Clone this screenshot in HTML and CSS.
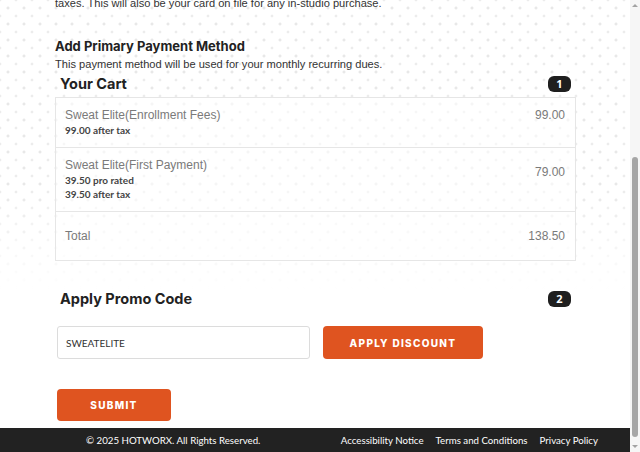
FILE: index.html
```html
<!DOCTYPE html>
<html lang="en">
<head>
<meta charset="utf-8">
<title>Checkout</title>
<link rel="stylesheet" href="styles.css">
</head>
<body>
<div class="page">
  <main class="content">
    <p class="intro">taxes. This will also be your card on file for any in-studio purchase.</p>
    <h2 class="section-title">Add Primary Payment Method</h2>
    <p class="desc">This payment method will be used for your monthly recurring dues.</p>

    <div class="step-head cart-head">
      <h3 class="step-title">Your Cart</h3>
      <span class="badge">1</span>
    </div>
    <div class="cart">
      <div class="cart-row">
        <div class="item">
          <div class="item-name">Sweat Elite(Enrollment Fees)</div>
          <div class="item-sub">99.00 after tax</div>
        </div>
        <div class="price">99.00</div>
      </div>
      <div class="cart-row">
        <div class="item">
          <div class="item-name">Sweat Elite(First Payment)</div>
          <div class="item-sub">39.50 pro rated</div>
          <div class="item-sub">39.50 after tax</div>
        </div>
        <div class="price price-mid">79.00</div>
      </div>
      <div class="cart-row total-row">
        <div class="item-name">Total</div>
        <div class="price">138.50</div>
      </div>
    </div>

    <div class="step-head promo-head">
      <h3 class="step-title">Apply Promo Code</h3>
      <span class="badge">2</span>
    </div>
    <div class="promo-row">
      <input class="promo-input" type="text" value="SWEATELITE">
      <button class="btn btn-apply" type="button">APPLY DISCOUNT</button>
    </div>
    <button class="btn btn-submit" type="button">SUBMIT</button>
  </main>
  <footer class="footer">
    <span class="copy">© 2025 HOTWORX. All Rights Reserved.</span>
    <nav class="links">
      <a href="#">Accessibility Notice</a>
      <a href="#">Terms and Conditions</a>
      <a href="#">Privacy Policy</a>
    </nav>
  </footer>
</div>
<div class="scrollbar">
  <div class="arrow arrow-up"></div>
  <div class="track"><div class="thumb"></div></div>
  <div class="arrow arrow-down"></div>
</div>
</body>
</html>
```
FILE: styles.css
```css
* { box-sizing: border-box; }
html, body { margin: 0; padding: 0; height: 452px; overflow: hidden; }
body {
  display: flex;
  font-family: "Liberation Sans", Arial, sans-serif;
  color: #333;
  background: #fff;
}
.page {
  flex: 1;
  display: flex;
  flex-direction: column;
  height: 452px;
  background:
    linear-gradient(to bottom, rgba(255,255,255,0) 0, rgba(255,255,255,0) 190px, #fff 290px),
    radial-gradient(circle, #e8e8e8 1.2px, rgba(255,255,255,0) 1.8px) 0 0 / 16px 16px,
    radial-gradient(circle, #ececec 1.1px, rgba(255,255,255,0) 1.7px) 8px 8px / 16px 16px,
    #fff;
}
.content {
  flex: 1;
  padding-left: 55px;
  display: flex;
  flex-direction: column;
  align-items: flex-start;
}
.intro {
  margin: -5px 0 0;
  font-size: 11.1px;
  line-height: 16px;
  color: #333;
}
.section-title {
  margin: 26px 0 0;
  font-family: Inter, "Liberation Sans", sans-serif;
  font-weight: 700;
  font-size: 13px;
  line-height: 18px;
  color: #222;
}
.desc {
  margin: 1px 0 0;
  font-size: 11.1px;
  line-height: 16px;
  color: #333;
}
.step-head {
  width: 521px;
  display: flex;
  justify-content: space-between;
  align-items: center;
  padding: 0 5px;
  height: 20px;
}
.cart-head { margin-top: 2px; margin-bottom: 3px; }
.promo-head { margin-top: 28px; }
.step-title {
  margin: 0;
  font-family: Inter, "Liberation Sans", sans-serif;
  font-weight: 700;
  font-size: 14.5px;
  line-height: 20px;
  color: #222;
}
.badge {
  width: 23px;
  height: 16px;
  border-radius: 6px;
  background: #1f1f1f;
  color: #fff;
  font-family: "Open Sans", sans-serif;
  font-weight: 700;
  font-size: 11px;
  line-height: 16px;
  text-align: center;
}
.cart {
  width: 521px;
  border: 1px solid #e6e6e6;
  background: rgba(255,255,255,0.55);
}
.cart-row {
  display: flex;
  justify-content: space-between;
  align-items: flex-start;
  padding: 9px 10px 10px 9px;
  border-top: 1px solid #e6e6e6;
}
.cart-row:first-child { border-top: 0; }
.total-row { padding: 16px 10px 16px 9px; }
.item-name {
  font-size: 12px;
  line-height: 16px;
  color: #7a7a7a;
}
.item-sub {
  font-family: Lato, "Open Sans", sans-serif;
  font-weight: 700;
  font-size: 10px;
  line-height: 14px;
  color: #444;
}
.price {
  font-size: 12px;
  line-height: 16px;
  color: #7a7a7a;
}
.price-mid { margin-top: 7px; }
.promo-row {
  display: flex;
  gap: 13px;
  margin: 17px 0 0 2px;
}
.promo-input {
  width: 253px;
  height: 33px;
  border: 1px solid #dcdcdc;
  border-radius: 3px;
  background: #fff;
  padding: 0 8px;
  font-family: Lato, "Open Sans", sans-serif;
  font-size: 10px;
  color: #333;
  outline: none;
}
.btn {
  border: 0;
  border-radius: 4px;
  background: #df5420;
  color: #fff;
  font-family: Inter, "Liberation Sans", sans-serif;
  font-weight: 800;
  font-size: 10px;
  letter-spacing: 1.3px;
  cursor: pointer;
}
.btn-apply { width: 160px; height: 33px; }
.btn-submit { width: 114px; height: 32px; margin: 30px 0 0 2px; }
.footer {
  height: 24px;
  background: #222;
  color: #fff;
  display: flex;
  align-items: center;
  justify-content: space-between;
  padding: 0 32px 0 86px;
  font-family: Lato, "Open Sans", sans-serif;
  font-size: 9.7px;
  margin-top: 7px;
}
.links { display: flex; gap: 12px; }
.links a { color: #fff; text-decoration: none; }
.scrollbar {
  width: 10px;
  height: 452px;
  background: #f6f6f6;
  display: flex;
  flex-direction: column;
  align-items: center;
}
.arrow { width: 0; height: 0; border-left: 3px solid transparent; border-right: 3px solid transparent; }
.arrow-up { margin-top: 4px; border-bottom: 3px solid #a3a3a3; }
.arrow-down { margin-bottom: 4px; border-top: 3px solid #a3a3a3; }
.track { flex: 1; width: 100%; display: flex; justify-content: center; }
.thumb {
  width: 6px;
  height: 280px;
  margin-top: 150px;
  border-radius: 3px;
  background: #a6a6a6;
}
```
